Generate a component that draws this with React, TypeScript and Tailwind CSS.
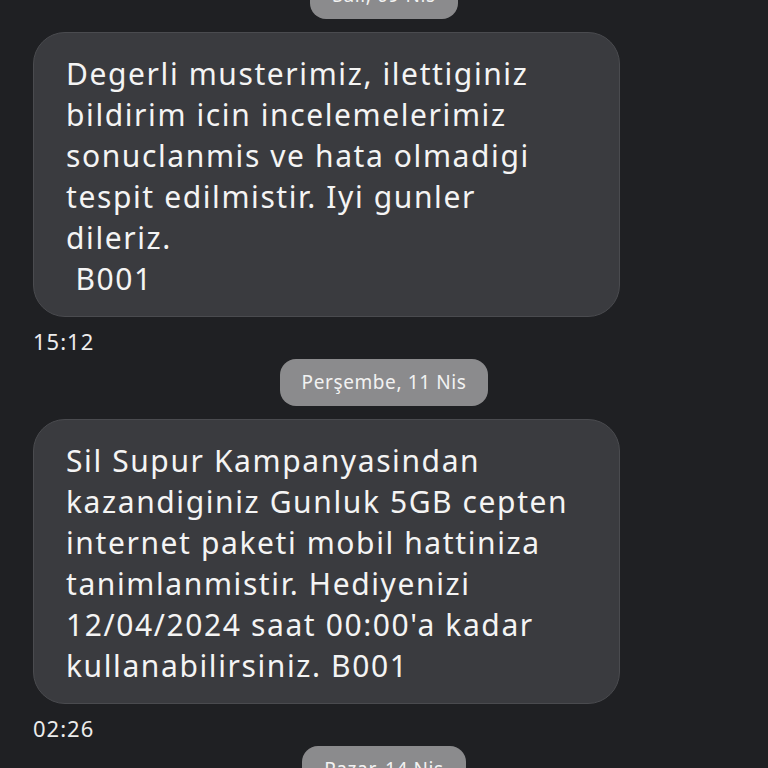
import React from 'react';

const font = { fontFamily: '"Noto Sans", "DejaVu Sans", sans-serif' };

const DatePill: React.FC<{ label: string; className?: string }> = ({ label, className = '' }) => (
  <div className={`shrink-0 self-center flex items-center justify-center h-[47px] px-[22px] rounded-[16px] bg-[#8b8b8d] text-[#f2f2f2] text-[19px] tracking-[0.6px] ${className}`}>
    {label}
  </div>
);

const Bubble: React.FC<{ text: string; time: string }> = ({ text, time }) => (
  <div className="shrink-0 flex flex-col">
    <div className="w-[587px] rounded-[32px] bg-[#3a3b3f] border border-[#4a4b4f] pl-[32px] pr-[20px] pt-[20px] pb-[17px] text-[30px] tracking-[1.6px] leading-[41px] text-[#f4f4f4] whitespace-pre-wrap">
      {text}
    </div>
    <div className="mt-[10px] text-[22px] tracking-[1px] leading-[28px] text-[#ececec]">{time}</div>
  </div>
);

const App: React.FC = () => {
  return (
    <div className="w-[768px] h-[768px] overflow-hidden bg-[#1f2023] flex flex-col px-[33px]" style={font}>
      <DatePill label="Salı, 09 Nis" className="-mt-[28px] mb-[13px]" />
      <Bubble
        time="15:12"
        text={'Degerli musterimiz, ilettiginiz\nbildirim icin incelemelerimiz\nsonuclanmis ve hata olmadigi\ntespit edilmistir. Iyi gunler\ndileriz.\n B001'}
      />
      <DatePill label="Perşembe, 11 Nis" className="mt-[4px] mb-[13px]" />
      <Bubble
        time="02:26"
        text={"Sil Supur Kampanyasindan\nkazandiginiz Gunluk 5GB cepten\ninternet paketi mobil hattiniza\ntanimlanmistir. Hediyenizi\n12/04/2024 saat 00:00'a kadar\nkullanabilirsiniz. B001"}
      />
      <DatePill label="Pazar, 14 Nis" className="mt-[4px]" />
    </div>
  );
};

export default App;
